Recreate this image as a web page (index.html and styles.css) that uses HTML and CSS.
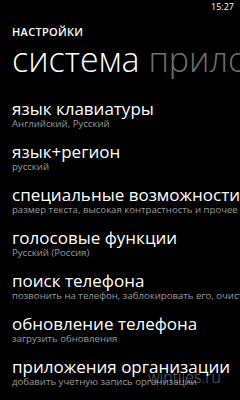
FILE: index.html
```html
<!DOCTYPE html>
<html lang="ru">
<head>
<meta charset="utf-8">
<link rel="stylesheet" href="styles.css">
</head>
<body>
<div class="phone">
  <div class="status"><span class="time">15:27</span></div>
  <div class="app-title">НАСТРОЙКИ</div>
  <div class="pivot"><span class="active">система</span> <span class="inactive">приложения</span></div>
  <ul class="list">
    <li class="item"><div class="title">язык клавиатуры</div><div class="sub">Английский, Русский</div></li>
    <li class="item"><div class="title">язык+регион</div><div class="sub">русский</div></li>
    <li class="item"><div class="title">специальные возможности</div><div class="sub">размер текста, высокая контрастность и прочее</div></li>
    <li class="item"><div class="title">голосовые функции</div><div class="sub">Русский (Россия)</div></li>
    <li class="item"><div class="title">поиск телефона</div><div class="sub">позвонить на телефон, заблокировать его, очистить</div></li>
    <li class="item"><div class="title">обновление телефона</div><div class="sub">загрузить обновления</div></li>
    <li class="item"><div class="title">приложения организации</div><div class="sub">добавить учетную запись организации</div></li>
  </ul>
  <div class="watermark">wintiles.ru</div>
</div>
</body>
</html>
```
FILE: styles.css
```css
html, body {
  margin: 0;
  padding: 0;
  background: #000;
}
.phone {
  position: relative;
  width: 240px;
  height: 400px;
  overflow: hidden;
  background: #000;
  color: #fff;
  font-family: "Open Sans", "Noto Sans", sans-serif;
}
.status {
  height: 26px;
  display: flex;
  justify-content: flex-end;
  padding-right: 6px;
}
.time {
  font-size: 9px;
  line-height: 12px;
  margin-top: 1px;
}
.app-title {
  margin-left: 12px;
  font-size: 11px;
  line-height: 12px;
  font-weight: 600;
  letter-spacing: 0.3px;
}
.pivot {
  margin: 1px 0 0 12px;
  font-size: 34px;
  line-height: 40px;
  font-weight: 300;
  white-space: nowrap;
  overflow: hidden;
}
.inactive {
  color: #707070;
}
.list {
  list-style: none;
  margin: 20px 0 0 0;
  padding: 0 0 0 12px;
}
.item {
  height: 43px;
  white-space: nowrap;
}
.title {
  font-size: 17px;
  line-height: 20px;
  font-weight: 400;
}
.sub {
  font-size: 9.6px;
  line-height: 10px;
  color: #9a9a9a;
}
.watermark {
  position: absolute;
  left: 148px;
  top: 367px;
  font-size: 16px;
  line-height: 20px;
  font-weight: 300;
  color: rgba(255,255,255,0.4);
}
```
